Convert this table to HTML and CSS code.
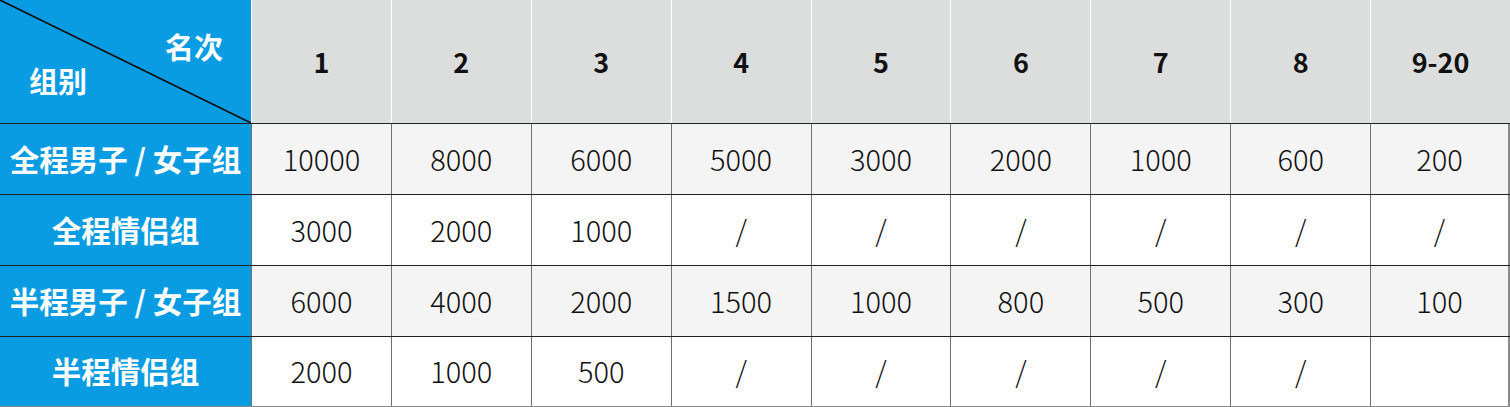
FILE: index.html
```html
<!DOCTYPE html>
<html lang="zh-CN">
<head>
<meta charset="utf-8">
<title>奖金表</title>
<link rel="stylesheet" href="styles.css">
</head>
<body>
<div class="table">
  <div class="row head">
    <div class="cell corner">
      <svg class="diag" viewBox="0 0 251 123" preserveAspectRatio="none"><line x1="0" y1="0" x2="251" y2="123" stroke="#111" stroke-width="1.6"/></svg>
      <span class="c-rank">名次</span>
      <span class="c-group">组别</span>
    </div>
    <div class="cell h">1</div>
    <div class="cell h">2</div>
    <div class="cell h">3</div>
    <div class="cell h">4</div>
    <div class="cell h">5</div>
    <div class="cell h">6</div>
    <div class="cell h">7</div>
    <div class="cell h">8</div>
    <div class="cell h">9-20</div>
  </div>
  <div class="row odd">
    <div class="cell label">全程男子 / 女子组</div>
    <div class="cell">10000</div><div class="cell">8000</div><div class="cell">6000</div><div class="cell">5000</div><div class="cell">3000</div><div class="cell">2000</div><div class="cell">1000</div><div class="cell">600</div><div class="cell">200</div>
  </div>
  <div class="row even">
    <div class="cell label">全程情侣组</div>
    <div class="cell">3000</div><div class="cell">2000</div><div class="cell">1000</div><div class="cell">/</div><div class="cell">/</div><div class="cell">/</div><div class="cell">/</div><div class="cell">/</div><div class="cell">/</div>
  </div>
  <div class="row odd">
    <div class="cell label">半程男子 / 女子组</div>
    <div class="cell">6000</div><div class="cell">4000</div><div class="cell">2000</div><div class="cell">1500</div><div class="cell">1000</div><div class="cell">800</div><div class="cell">500</div><div class="cell">300</div><div class="cell">100</div>
  </div>
  <div class="row even last">
    <div class="cell label">半程情侣组</div>
    <div class="cell">2000</div><div class="cell">1000</div><div class="cell">500</div><div class="cell">/</div><div class="cell">/</div><div class="cell">/</div><div class="cell">/</div><div class="cell">/</div><div class="cell"></div>
  </div>
</div>
</body>
</html>
```

FILE: styles.css
```css
html, body {
  margin: 0;
  padding: 0;
  background: #ffffff;
}
.table {
  width: 1510px;
  font-family: "Noto Sans CJK SC", "Noto Sans", sans-serif;
  color: #111;
}
.row {
  display: grid;
  grid-template-columns: 251px repeat(9, 1fr);
  height: 71px;
  border-top: 1px solid #222;
  box-sizing: border-box;
}
.row.head {
  height: 124px;
  border-top: none;
  border-bottom: 1px solid #222;
  background: #dcdddd;
}
.row.head + .row { border-top: none; height: 70px; }
.row.odd { background: #f4f4f4; }
.row.even { background: #ffffff; }
.row.last { border-bottom: 1px solid #8a8a8a; }
.cell {
  display: flex;
  align-items: center;
  justify-content: center;
  font-size: 29px;
  font-weight: 300;
  padding-bottom: 3px;
  border-left: 1px solid #707070;
  box-sizing: border-box;
}
.cell:last-child { border-right: 2px solid #8a8a8a; }
.row.head .cell { border-left: 1px solid #ffffff; padding-bottom: 1px; }
.row.head .cell:last-child { border-right: none; }
.cell.h {
  font-weight: 700;
  font-size: 27px;
}
.cell.label, .cell.corner {
  background: #0a9ce2;
  color: #ffffff;
  font-weight: 700;
  font-size: 29.5px;
  border-left: none;
}
.row.head .cell.corner { border-left: none; padding-bottom: 0; }
.corner {
  position: relative;
  flex-direction: column;
  align-items: stretch;
  justify-content: flex-start;
}
.diag {
  position: absolute;
  left: 0;
  top: 0;
  width: 100%;
  height: 100%;
}
.c-rank, .c-group {
  font-size: 29px;
  line-height: 28px;
  height: 28px;
}
.c-rank {
  margin-top: 32px;
  align-self: flex-end;
  margin-right: 28px;
}
.c-group {
  margin-top: 6px;
  align-self: flex-start;
  margin-left: 29px;
}
```
